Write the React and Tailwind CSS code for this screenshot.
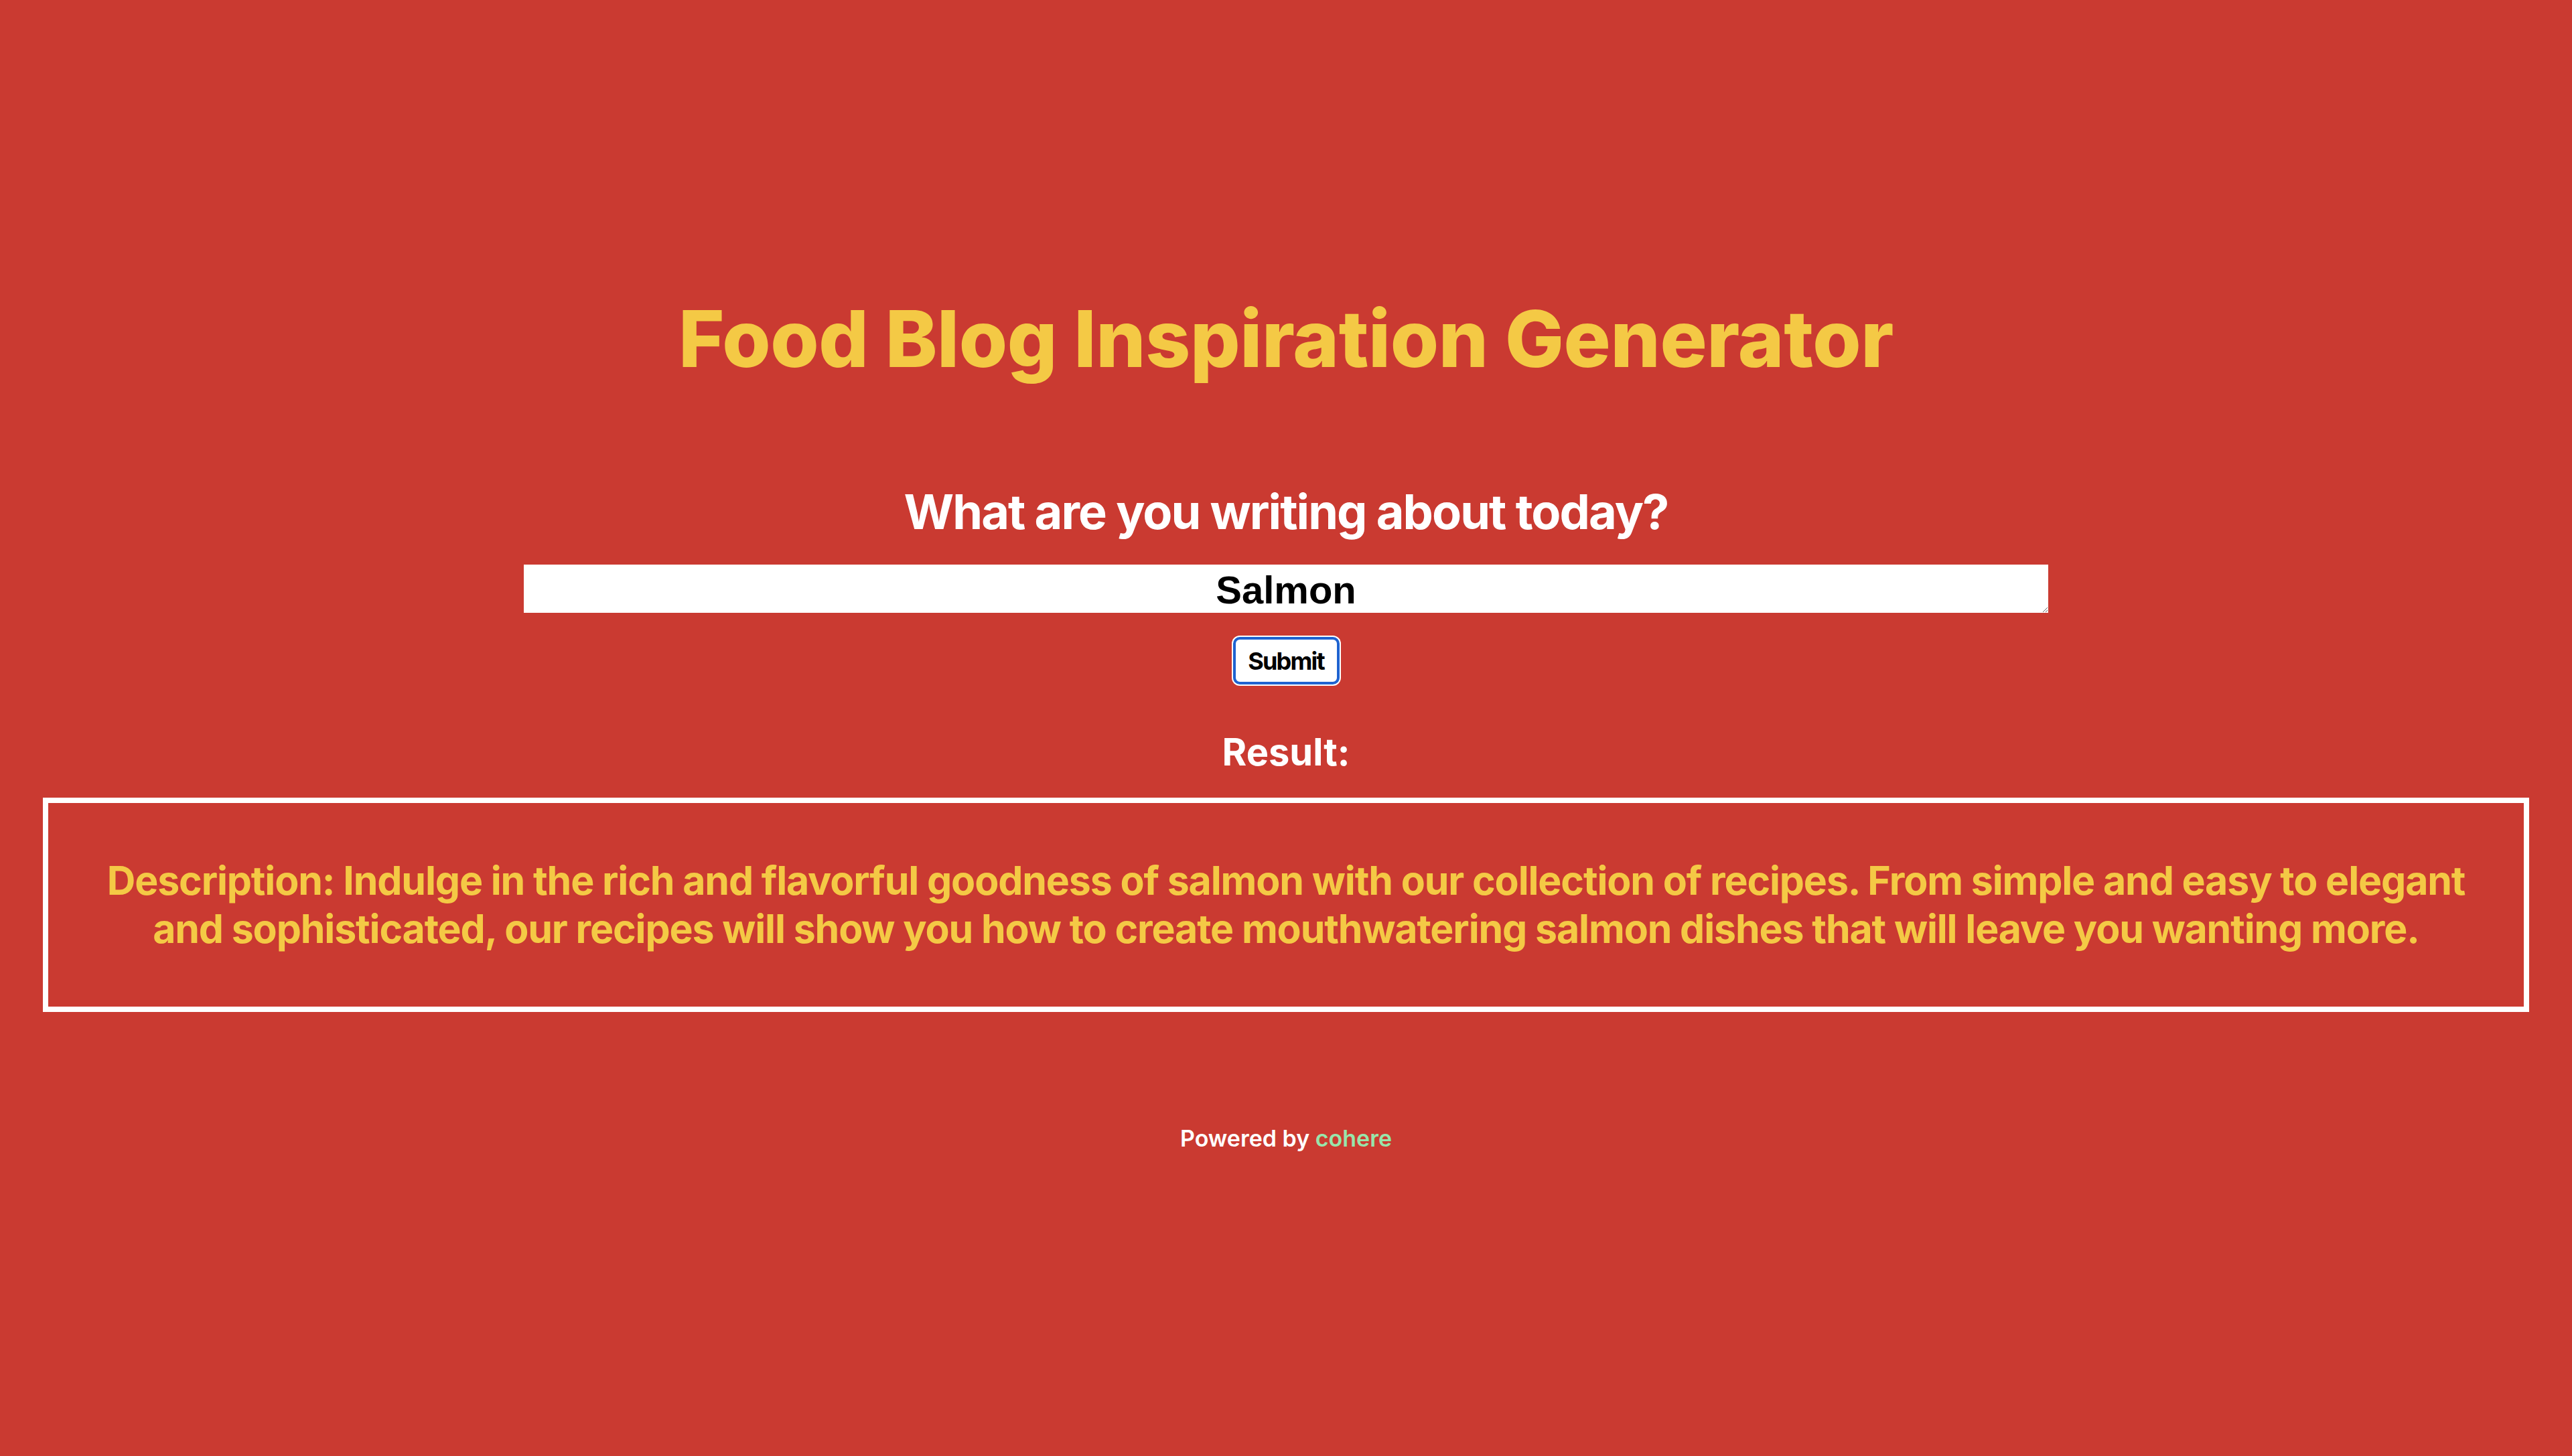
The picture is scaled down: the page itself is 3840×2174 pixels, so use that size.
import React from 'react';

const App = () => {
    return (
        <div className="min-h-screen bg-[#ca3a31] font-['Inter',sans-serif] flex flex-col items-center pt-[435px]">
            <h1 className="text-[117px] leading-[142px] font-extrabold tracking-[-0.4px] text-[#f4c945] text-center">
                Food Blog Inspiration Generator
            </h1>

            <h2 className="mt-[143px] text-[72px] leading-[87px] font-bold tracking-[-0.027em] text-white text-center">
                What are you writing about today?
            </h2>

            <textarea
                className="mt-[36px] w-[2276px] h-[72px] bg-white text-black text-center font-['Liberation_Sans',Arial,sans-serif] font-bold text-[58px] leading-[67px] pt-[4px] outline-none border-0"
                defaultValue="Salmon"
            />

            <button className="mt-[36px] w-[159px] h-[71px] bg-white border-4 border-[#1f63d0] rounded-[10px] shadow-[0_0_0_2px_#ffffff] text-black font-bold text-[36px] tracking-[-0.05em] leading-none">
                Submit
            </button>

            <h3 className="mt-[67px] text-[56px] leading-[68px] font-bold text-white text-center">
                Result:
            </h3>

            <div className="mt-[34px] self-stretch mx-[64px] border-8 border-white px-[80px] py-[80px]">
                <p className="text-[59px] leading-[72px] font-bold tracking-[-0.0193em] text-[#f4c945] text-center">
                    Description: Indulge in the rich and flavorful goodness of salmon with our collection of recipes. From simple and easy to elegant and sophisticated, our recipes will show you how to create mouthwatering salmon dishes that will leave you wanting more.
                </p>
            </div>

            <p className="mt-[168px] text-[34px] leading-[41px] font-semibold text-white text-center">
                Powered by <span className="text-[#98e5ab]">cohere</span>
            </p>
        </div>
    );
};

export default App;
